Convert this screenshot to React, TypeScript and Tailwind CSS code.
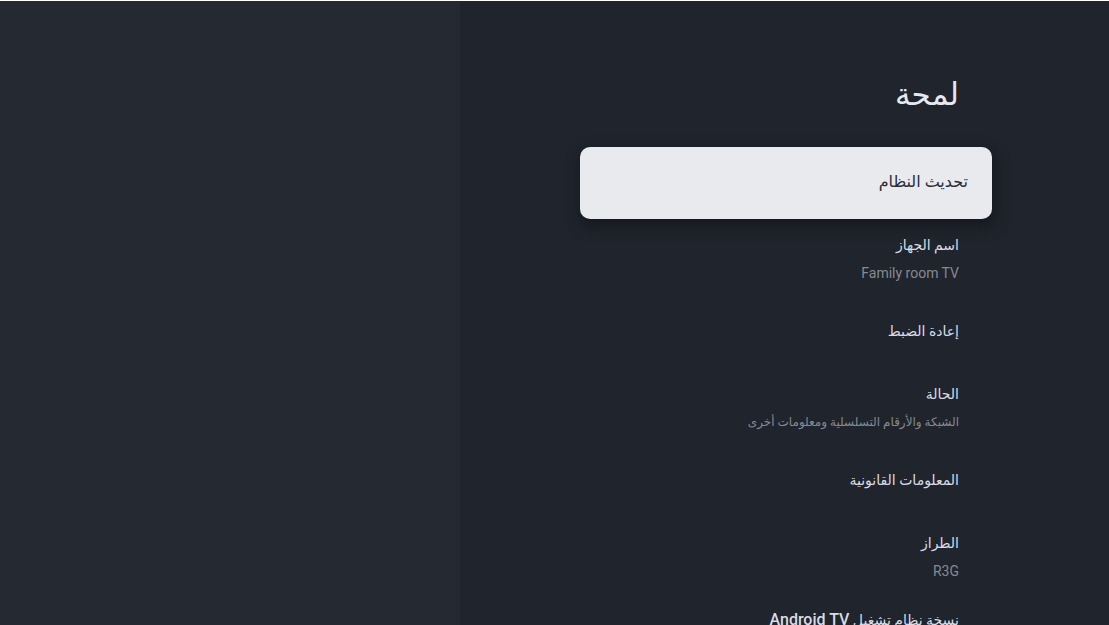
import { useState } from "react";

type Setting = {
  id: string;
  title: string;
  product?: string;
  summary?: string;
  latin?: boolean;
};

const settings: Setting[] = [
  { id: "update", title: "تحديث النظام" },
  { id: "name", title: "اسم الجهاز", summary: "Family room TV", latin: true },
  { id: "reset", title: "إعادة الضبط" },
  { id: "status", title: "الحالة", summary: "الشبكة والأرقام التسلسلية ومعلومات أخرى" },
  { id: "legal", title: "المعلومات القانونية" },
  { id: "model", title: "الطراز", summary: "R3G", latin: true },
  { id: "version", title: "نسخة نظام تشغيل", product: "Android TV", summary: "" },
];

type SettingRowProps = {
  setting: Setting;
  focused: boolean;
  onFocus: () => void;
};

function SettingRow({ setting, focused, onFocus }: SettingRowProps) {
  const hasSummary = setting.summary !== undefined;

  return (
    <li>
      <button
        type="button"
        onClick={onFocus}
        className={
          "block w-full rounded-[10px] text-start cursor-pointer " +
          (focused ? "bg-[#e8eaee] text-base text-[#2b2e35] px-6 shadow-[2px_6px_14px_2px_rgba(16,18,24,0.6)] " : "text-sm text-[#d9dce3] px-[33px] ") +
          (hasSummary ? "h-[77px] pt-0.5" : "h-[72px] pb-0.5")
        }
      >
        <span className="block leading-5">
          {setting.title}
          {setting.product && <> <bdi className="text-base leading-5 font-medium">{setting.product}</bdi></>}
        </span>
        {
          hasSummary &&
          <span className={"block mt-2 min-h-5 text-[#868a92] " + (setting.latin ? "text-sm/5" : "text-xs/5")}>
            {setting.summary}
          </span>
        }
      </button>
    </li>
  );
}

export default function App() {
  const [focusedId, setFocusedId] = useState("update");

  return (
    <div
      dir="rtl"
      lang="ar"
      className="flex h-screen overflow-hidden border-t border-white bg-[#242932] font-[Roboto,'DejaVu_Sans',sans-serif]"
    >
      <main className="w-[58.5%] bg-[#1f242d] ps-[117px] pe-[120px]">
        <h1 className="px-[33px] pt-[70px] pb-7 text-[31px] leading-12 text-[#e6e9f0]">لمحة</h1>
        <ul>
          {
            settings.map((setting) => (
              <SettingRow
                key={setting.id}
                setting={setting}
                focused={setting.id === focusedId}
                onFocus={() => setFocusedId(setting.id)}
              />
            ))
          }
        </ul>
      </main>
    </div>
  )
}
